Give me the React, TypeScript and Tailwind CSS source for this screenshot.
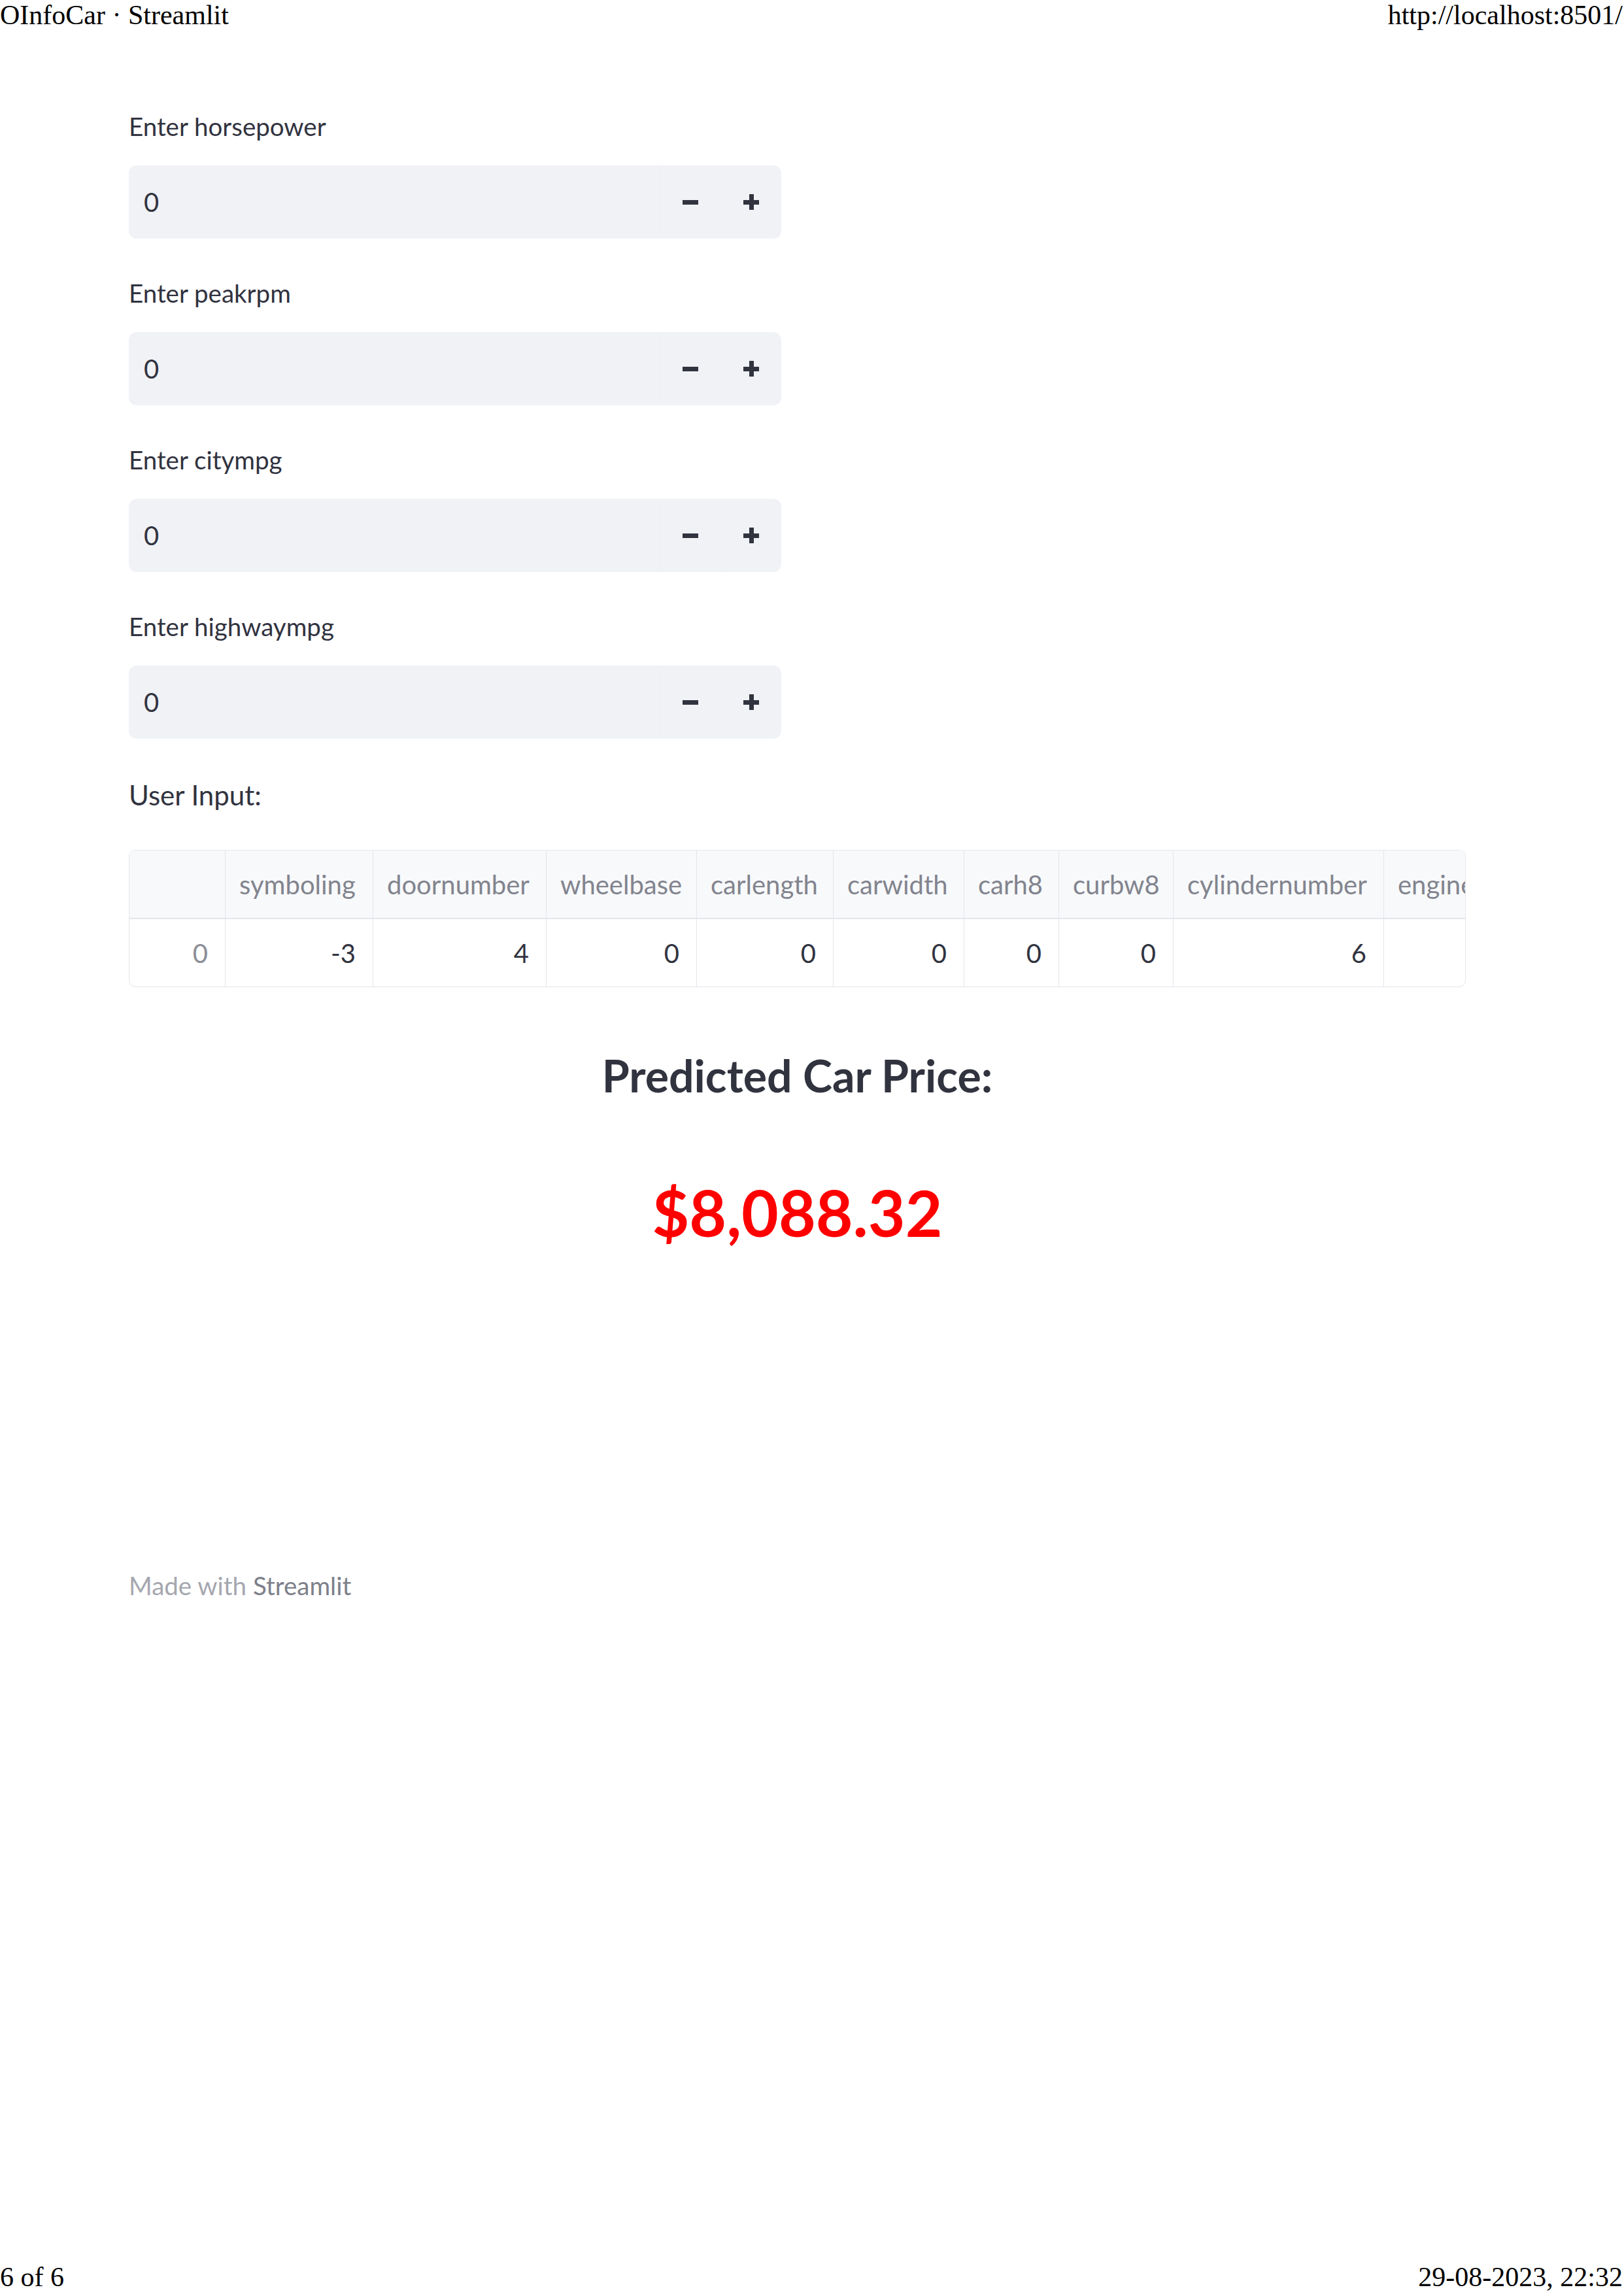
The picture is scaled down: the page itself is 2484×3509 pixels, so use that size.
import React from "react";

const inputs = ["Enter horsepower", "Enter peakrpm", "Enter citympg", "Enter highwaympg"];

// column widths and header / value for the dataframe
const columns = [
  { name: "symboling", value: "-3", w: "w-[226px]" },
  { name: "doornumber", value: "4", w: "w-[265px]" },
  { name: "wheelbase", value: "0", w: "w-[230px]" },
  { name: "carlength", value: "0", w: "w-[209px]" },
  { name: "carwidth", value: "0", w: "w-[200px]" },
  { name: "carh8", value: "0", w: "w-[145px]" },
  { name: "curbw8", value: "0", w: "w-[175px]" },
  { name: "cylindernumber", value: "6", w: "w-[322px]" },
  { name: "enginesize", value: "", w: "w-[300px]" },
];

function NumberInput({ label, first }: { label: string; first?: boolean }) {
  return (
    <div className={first ? "flex flex-col" : "flex flex-col mt-[59px]"}>
      <div className="text-[38.5px] leading-[48px] text-[#31333f] mb-[36px]">{label}</div>
      <div className="flex h-[112px] w-[998px] rounded-[12px] bg-[#f0f2f6] overflow-hidden">
        <div className="flex flex-1 items-center pl-[23px] text-[40px] text-[#31333f]">0</div>
        {/* step buttons */}
        <div className="flex w-[93px] items-center justify-center border-l border-[#eef0f4]">
          <span className="block h-[7px] w-[24px] bg-[#31333f]" />
        </div>
        <div className="relative flex w-[93px] items-center justify-center border-l border-[#eef0f4]">
          <span className="block h-[7px] w-[24px] bg-[#31333f]" />
          <span className="absolute h-[24px] w-[7px] bg-[#31333f]" />
        </div>
      </div>
    </div>
  );
}

export default function App() {
  return (
    <div className="flex h-[3509px] w-[2484px] flex-col bg-white font-['Lato','Noto_Sans',sans-serif]">
      {/* print header */}
      <div className="flex justify-between font-['Liberation_Serif',serif] text-[42px] leading-[46px] text-black">
        <span>OInfoCar · Streamlit</span>
        <span className="pr-[2px]">http://localhost:8501/</span>
      </div>

      <main className="flex flex-1 flex-col pl-[197px] pt-[123px]">
        {inputs.map((label, i) => (
          <NumberInput key={label} label={label} first={i === 0} />
        ))}

        <div className="mt-[61px] text-[42px] leading-[50px] text-[#31333f]">User Input:</div>

        {/* dataframe */}
        <div className="mt-[59px] w-[2045px] overflow-hidden rounded-[10px] border border-[#e4e6eb]">
          <div className="flex h-[105px] border-b-2 border-[#e4e6eb] bg-[#f8f9fb] text-[40px] text-[#82848e]">
            <div className="w-[147px] shrink-0 border-r border-[#e4e6eb]" />
            {columns.map((c) => (
              <div
                key={c.name}
                className={`${c.w} flex shrink-0 items-center whitespace-nowrap border-r border-[#e4e6eb] pl-[21px]`}
              >
                {c.name}
              </div>
            ))}
          </div>
          <div className="flex h-[103px] text-[40px] text-[#31333f]">
            <div className="flex w-[147px] shrink-0 items-center justify-end border-r border-[#e4e6eb] pr-[26px] text-[#8b8d96]">
              0
            </div>
            {columns.map((c) => (
              <div
                key={c.name}
                className={`${c.w} flex shrink-0 items-center justify-end border-r border-[#e4e6eb] pr-[26px]`}
              >
                {c.value}
              </div>
            ))}
          </div>
        </div>

        <div className="mt-[95px] w-[2045px] text-center text-[68px] font-bold leading-[80px] text-[#31333f]">
          Predicted Car Price:
        </div>
        <div className="mt-[112px] w-[2045px] text-center text-[98px] font-bold leading-[114px] text-[#ff0000]">
          $8,088.32
        </div>

        <div className="mt-[490px] text-[38.5px] leading-[48px] text-[#a5a7af]">
          Made with <span className="text-[#7d808a]">Streamlit</span>
        </div>
      </main>

      {/* print footer */}
      <div className="flex justify-between pb-[3px] font-['Liberation_Serif',serif] text-[42px] leading-[46px] text-black">
        <span>6 of 6</span>
        <span className="pr-[2px]">29-08-2023, 22:32</span>
      </div>
    </div>
  );
}
